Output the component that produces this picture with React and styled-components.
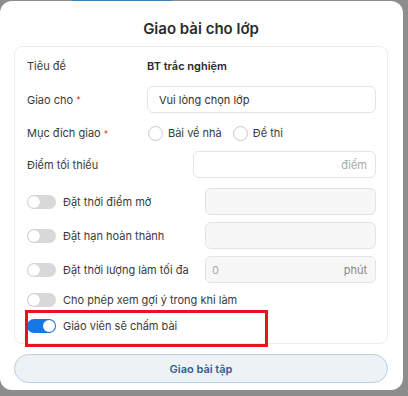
import React from 'react'
import styled, { createGlobalStyle } from 'styled-components'

const GlobalStyle = createGlobalStyle`
  html, body {
    margin: 0;
    padding: 0;
    background: #8d8d8d;
    font-family: Inter, "Noto Sans", sans-serif;
    color: #333;
  }
  * { box-sizing: border-box; }
`

const Backdrop = styled.div`
  width: 408px;
  height: 396px;
  overflow: hidden;
  position: relative;
`

const TopStrip = styled.div`
  height: 1px;
  display: flex;
  span {
    margin-left: 72px;
    width: 100px;
    background: #3f7fb8;
  }
`

const Modal = styled.div`
  position: relative;
  width: 403px;
  height: 389px;
  background: #fff;
  border-radius: 12px;
  padding: 18px 15px 0 14px;
`

const Title = styled.h2`
  margin: 0 0 7px;
  font-size: 15px;
  line-height: 20px;
  font-weight: 600;
  text-align: center;
  color: #2b2b2b;
`

const Card = styled.div`
  border: 1px solid #ececec;
  border-radius: 8px;
  padding: 6px 11px 7px 12px;
  display: flex;
  flex-direction: column;
`

const Row = styled.div`
  display: flex;
  align-items: center;
  min-height: ${p => p.$h || 27}px;
  margin-top: ${p => p.$mt || 0}px;
`

const Label = styled.div`
  width: ${p => p.$w}px;
  flex-shrink: 0;
  font-size: 11px;
  color: #3a3a3a;
  display: flex;
  align-items: center;
`

const Required = styled.span`
  color: #e53935;
  margin-left: 3px;
  font-size: 9px;
`

const Value = styled.div`
  font-size: 11px;
  font-weight: 600;
  color: #2b2b2b;
`

const Field = styled.div`
  flex: 1;
  height: 27px;
  border: 1px solid #e3e3e3;
  border-radius: 6px;
  background: ${p => (p.$disabled ? '#f7f7f7' : '#fff')};
  display: flex;
  align-items: center;
  justify-content: space-between;
  padding: 0 8px 0 ${p => p.$pl || 11}px;
  font-size: 11px;
  color: #333;
`

const Muted = styled.span`
  color: ${p => p.$c || '#aaa'};
`

const Radios = styled.div`
  display: flex;
  align-items: center;
  gap: 11px;
  padding-left: 1px;
`

const Radio = styled.label`
  display: flex;
  align-items: center;
  gap: 5px;
  font-size: 11px;
  color: #3a3a3a;
  &::before {
    content: '';
    width: 13px;
    height: 13px;
    border: 1px solid #c9c9c9;
    border-radius: 50%;
    background: #fff;
  }
`

const ToggleLabel = styled.div`
  width: ${p => (p.$auto ? 'auto' : '178px')};
  flex-shrink: 0;
  display: flex;
  align-items: center;
  gap: 7px;
  font-size: 11px;
  color: #3a3a3a;
`

const Toggle = styled.span`
  position: relative;
  width: 29px;
  height: 14px;
  border-radius: 7px;
  flex-shrink: 0;
  background: ${p => (p.$on ? '#1677e5' : '#d8d8d8')};
  &::after {
    content: '';
    position: absolute;
    top: 1px;
    left: ${p => (p.$on ? '16px' : '1px')};
    width: 12px;
    height: 12px;
    border-radius: 50%;
    background: #fff;
    box-shadow: 0 0 1px rgba(0, 0, 0, 0.2);
  }
`

const SubmitButton = styled.button`
  display: block;
  width: 374px;
  height: 29px;
  margin-top: 10px;
  border-radius: 15px;
  border: 1px solid #b9cfe4;
  background: #edf2f7;
  color: #2f5f8f;
  font-family: inherit;
  font-size: 11px;
  font-weight: 600;
`

const Highlight = styled.div`
  position: absolute;
  left: 25px;
  top: 309px;
  width: 243px;
  height: 37px;
  border: 3px solid #e8141c;
  pointer-events: none;
`

export default function App() {
  return (
    <Backdrop>
      <GlobalStyle />
      <TopStrip><span /></TopStrip>
      <Modal>
        <Title>Giao bài cho lớp</Title>
        <Card>
          <Row $h={26}>
            <Label $w={120}>Tiêu đề</Label>
            <Value>BT trắc nghiệm</Value>
          </Row>
          <Row $mt={7}>
            <Label $w={120}>Giao cho<Required>*</Required></Label>
            <Field>Vui lòng chọn lớp</Field>
          </Row>
          <Row $h={24} $mt={8}>
            <Label $w={120}>Mục đích giao<Required>*</Required></Label>
            <Radios>
              <Radio>Bài về nhà</Radio>
              <Radio>Đề thi</Radio>
            </Radios>
          </Row>
          <Row $mt={6}>
            <Label $w={166}>Điểm tối thiểu</Label>
            <Field><span /><Muted>điểm</Muted></Field>
          </Row>
          <Row $mt={10}>
            <ToggleLabel><Toggle />Đặt thời điểm mở</ToggleLabel>
            <Field $disabled />
          </Row>
          <Row $mt={7}>
            <ToggleLabel><Toggle />Đặt hạn hoàn thành</ToggleLabel>
            <Field $disabled />
          </Row>
          <Row $mt={7}>
            <ToggleLabel><Toggle />Đặt thời lượng làm tối đa</ToggleLabel>
            <Field $disabled $pl={6}><Muted>0</Muted><Muted $c="#888">phút</Muted></Field>
          </Row>
          <Row $h={20} $mt={7}>
            <ToggleLabel $auto><Toggle />Cho phép xem gợi ý trong khi làm</ToggleLabel>
          </Row>
          <Row $h={20} $mt={6}>
            <ToggleLabel><Toggle $on />Giáo viên sẽ chấm bài</ToggleLabel>
          </Row>
        </Card>
        <SubmitButton>Giao bài tập</SubmitButton>
        <Highlight />
      </Modal>
    </Backdrop>
  )
}
